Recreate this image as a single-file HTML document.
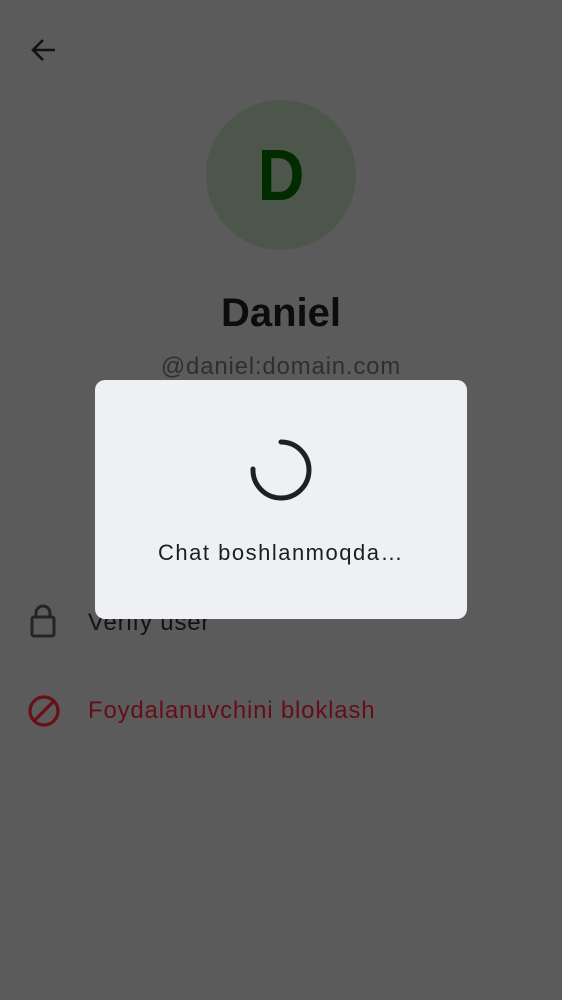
<!DOCTYPE html>
<html><head><style>
body{margin:0;width:562px;height:1000px;background:#5b5b5b;font-family:"Liberation Sans",sans-serif;position:relative;overflow:hidden}
.a{position:absolute}
</style></head><body>
<svg class="a" style="left:29px;top:37px" width="28" height="26" viewBox="0 0 28 26"><path d="M26 13H4M14 3L4 13l10 10" stroke="#111" stroke-width="2.6" fill="none"/></svg>
<div class="a" style="left:206px;top:100px;width:150px;height:150px;border-radius:50%;background:#4d564a"></div>
<div class="a" style="left:206px;top:138px;width:150px;text-align:center;font-size:72px;font-weight:bold;color:#002c00;line-height:76px;transform:scaleX(0.9)">D</div>
<div class="a" style="left:0;top:291px;width:562px;text-align:center;font-size:40px;font-weight:bold;color:#0c0c0c">Daniel</div>
<div class="a" style="left:0;top:353px;width:562px;text-align:center;font-size:24px;color:#2f2f2f;letter-spacing:0.8px">@daniel:domain.com</div>
<svg class="a" style="left:29px;top:603px" width="28" height="36" viewBox="0 0 28 36"><rect x="3" y="14" width="22" height="19" rx="2" stroke="#222528" stroke-width="3" fill="none"/><path d="M7 14V10a7 7 0 0 1 14 0v4" stroke="#222528" stroke-width="3" fill="none"/></svg>
<div class="a" style="left:88px;top:609px;font-size:24px;color:#121212;letter-spacing:0.8px">Verify user</div>
<svg class="a" style="left:27px;top:694px" width="34" height="34" viewBox="0 0 34 34"><circle cx="17" cy="17" r="14" stroke="#6a0f18" stroke-width="3.2" fill="none"/><path d="M7 27L27 7" stroke="#6a0f18" stroke-width="3.2"/></svg>
<div class="a" style="left:88px;top:697px;font-size:24px;color:#640e17;letter-spacing:0.8px">Foydalanuvchini bloklash</div>
<div class="a" style="left:95px;top:380px;width:372px;height:239px;border-radius:10px;background:#eff0f4"></div>
<svg class="a" style="left:241px;top:430px" width="80" height="80" viewBox="0 0 80 80"><path d="M40 12A28 28 0 1 1 12 39" stroke="#1e2025" stroke-width="5" stroke-linecap="round" fill="none"/></svg>
<div class="a" style="left:95px;top:540px;width:372px;text-align:center;font-size:22px;color:#1b1d22;letter-spacing:1.5px">Chat boshlanmoqda…</div>
</body></html>
